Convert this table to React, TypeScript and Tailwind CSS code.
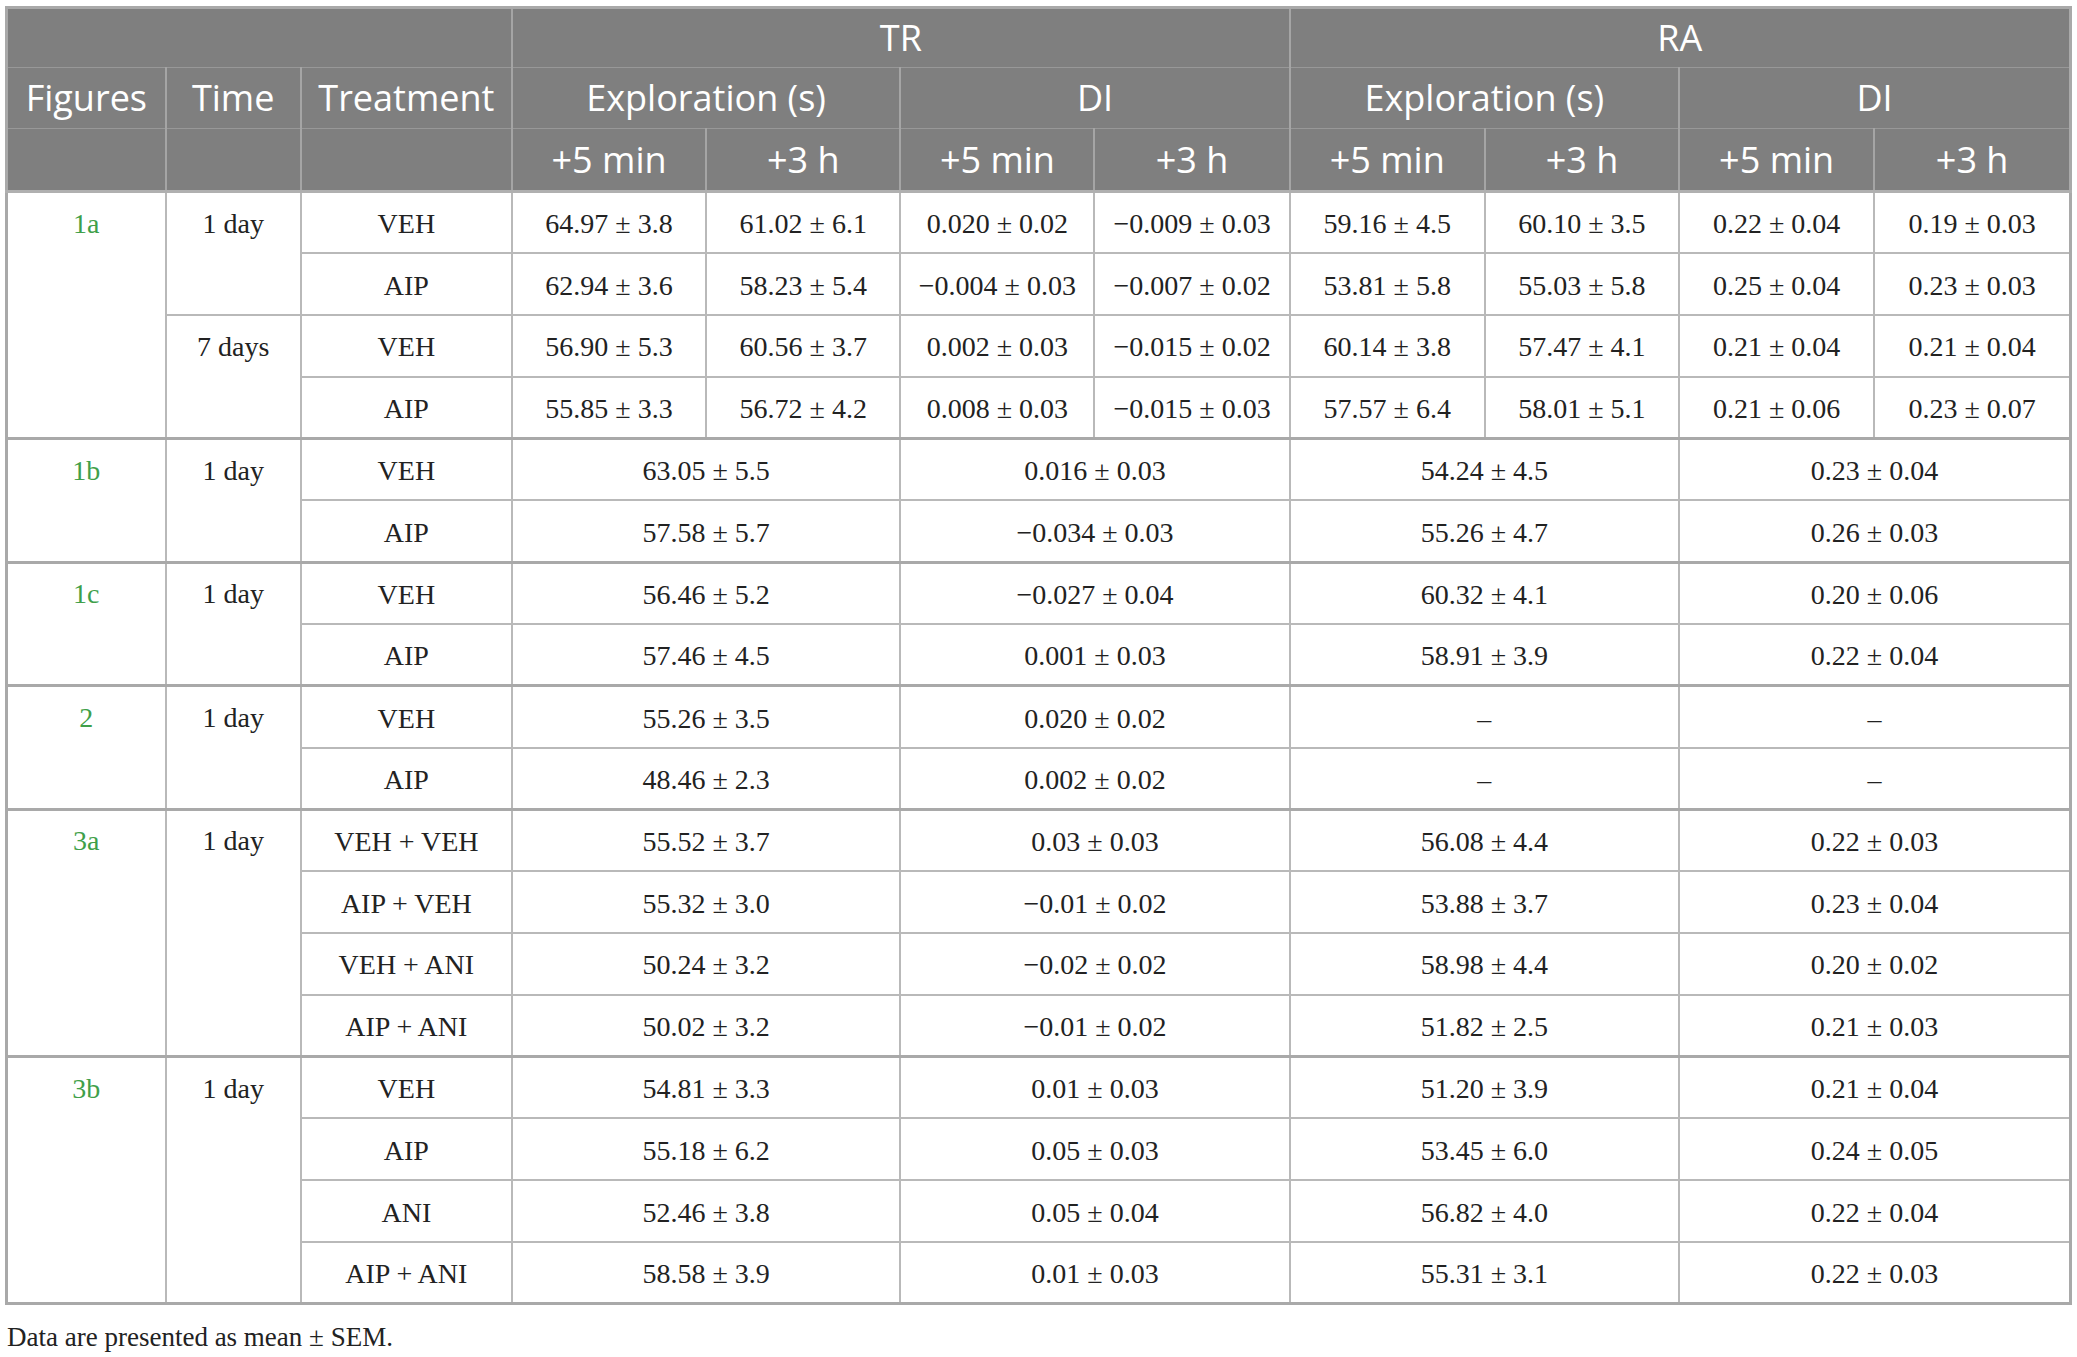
import React from "react";

type Row = { t?: string; tSpan?: number; treat: string; v: string[] };
type Group = { fig: string; rows: Row[] };

const groups: Group[] = [
  {
    fig: "1a",
    rows: [
      { t: "1 day", tSpan: 2, treat: "VEH", v: ["64.97 ± 3.8", "61.02 ± 6.1", "0.020 ± 0.02", "−0.009 ± 0.03", "59.16 ± 4.5", "60.10 ± 3.5", "0.22 ± 0.04", "0.19 ± 0.03"] },
      { treat: "AIP", v: ["62.94 ± 3.6", "58.23 ± 5.4", "−0.004 ± 0.03", "−0.007 ± 0.02", "53.81 ± 5.8", "55.03 ± 5.8", "0.25 ± 0.04", "0.23 ± 0.03"] },
      { t: "7 days", tSpan: 2, treat: "VEH", v: ["56.90 ± 5.3", "60.56 ± 3.7", "0.002 ± 0.03", "−0.015 ± 0.02", "60.14 ± 3.8", "57.47 ± 4.1", "0.21 ± 0.04", "0.21 ± 0.04"] },
      { treat: "AIP", v: ["55.85 ± 3.3", "56.72 ± 4.2", "0.008 ± 0.03", "−0.015 ± 0.03", "57.57 ± 6.4", "58.01 ± 5.1", "0.21 ± 0.06", "0.23 ± 0.07"] },
    ],
  },
  {
    fig: "1b",
    rows: [
      { t: "1 day", tSpan: 2, treat: "VEH", v: ["63.05 ± 5.5", "0.016 ± 0.03", "54.24 ± 4.5", "0.23 ± 0.04"] },
      { treat: "AIP", v: ["57.58 ± 5.7", "−0.034 ± 0.03", "55.26 ± 4.7", "0.26 ± 0.03"] },
    ],
  },
  {
    fig: "1c",
    rows: [
      { t: "1 day", tSpan: 2, treat: "VEH", v: ["56.46 ± 5.2", "−0.027 ± 0.04", "60.32 ± 4.1", "0.20 ± 0.06"] },
      { treat: "AIP", v: ["57.46 ± 4.5", "0.001 ± 0.03", "58.91 ± 3.9", "0.22 ± 0.04"] },
    ],
  },
  {
    fig: "2",
    rows: [
      { t: "1 day", tSpan: 2, treat: "VEH", v: ["55.26 ± 3.5", "0.020 ± 0.02", "–", "–"] },
      { treat: "AIP", v: ["48.46 ± 2.3", "0.002 ± 0.02", "–", "–"] },
    ],
  },
  {
    fig: "3a",
    rows: [
      { t: "1 day", tSpan: 4, treat: "VEH + VEH", v: ["55.52 ± 3.7", "0.03 ± 0.03", "56.08 ± 4.4", "0.22 ± 0.03"] },
      { treat: "AIP + VEH", v: ["55.32 ± 3.0", "−0.01 ± 0.02", "53.88 ± 3.7", "0.23 ± 0.04"] },
      { treat: "VEH + ANI", v: ["50.24 ± 3.2", "−0.02 ± 0.02", "58.98 ± 4.4", "0.20 ± 0.02"] },
      { treat: "AIP + ANI", v: ["50.02 ± 3.2", "−0.01 ± 0.02", "51.82 ± 2.5", "0.21 ± 0.03"] },
    ],
  },
  {
    fig: "3b",
    rows: [
      { t: "1 day", tSpan: 4, treat: "VEH", v: ["54.81 ± 3.3", "0.01 ± 0.03", "51.20 ± 3.9", "0.21 ± 0.04"] },
      { treat: "AIP", v: ["55.18 ± 6.2", "0.05 ± 0.03", "53.45 ± 6.0", "0.24 ± 0.05"] },
      { treat: "ANI", v: ["52.46 ± 3.8", "0.05 ± 0.04", "56.82 ± 4.0", "0.22 ± 0.04"] },
      { treat: "AIP + ANI", v: ["58.58 ± 3.9", "0.01 ± 0.03", "55.31 ± 3.1", "0.22 ± 0.03"] },
    ],
  },
];

const colWidths = [159, 135, 211, 194, 194, 194, 195, 195, 194, 195, 196];

export default function App() {
  return (
    <div className="min-h-screen bg-white pl-[5px] pt-[6px]">
      <table className="table-fixed border-collapse border-[3px] border-[#a9a9a9] w-[2067px] font-['Liberation_Serif',serif] text-[28px] text-[#222]">
        <colgroup>
          {colWidths.map((w, i) => (
            <col key={i} style={{ width: w }} />
          ))}
        </colgroup>
        <thead className="bg-[#7f7f7f] text-white font-['Open_Sans',sans-serif] text-[36px] font-normal">
          <tr className="h-[60px]">
            <th colSpan={3} className="border border-[#989898] border-x-2 border-x-[#a5a5a5] font-normal"></th>
            <th colSpan={4} className="border border-[#989898] border-x-2 border-x-[#a5a5a5] font-normal leading-none">TR</th>
            <th colSpan={4} className="border border-[#989898] border-x-2 border-x-[#a5a5a5] font-normal leading-none">RA</th>
          </tr>
          <tr className="h-[61px]">
            <th className="border border-[#989898] border-x-2 border-x-[#a5a5a5] font-normal leading-none">Figures</th>
            <th className="border border-[#989898] border-x-2 border-x-[#a5a5a5] font-normal leading-none">Time</th>
            <th className="border border-[#989898] border-x-2 border-x-[#a5a5a5] font-normal leading-none">Treatment</th>
            <th colSpan={2} className="border border-[#989898] border-x-2 border-x-[#a5a5a5] font-normal leading-none">Exploration (s)</th>
            <th colSpan={2} className="border border-[#989898] border-x-2 border-x-[#a5a5a5] font-normal leading-none">DI</th>
            <th colSpan={2} className="border border-[#989898] border-x-2 border-x-[#a5a5a5] font-normal leading-none">Exploration (s)</th>
            <th colSpan={2} className="border border-[#989898] border-x-2 border-x-[#a5a5a5] font-normal leading-none">DI</th>
          </tr>
          <tr className="h-[63px]">
            <th className="border border-[#989898] border-x-2 border-x-[#a5a5a5] border-b-[3px] border-b-[#b0b0b0] font-normal"></th>
            <th className="border border-[#989898] border-x-2 border-x-[#a5a5a5] border-b-[3px] border-b-[#b0b0b0] font-normal"></th>
            <th className="border border-[#989898] border-x-2 border-x-[#a5a5a5] border-b-[3px] border-b-[#b0b0b0] font-normal"></th>
            {["+5 min", "+3 h", "+5 min", "+3 h", "+5 min", "+3 h", "+5 min", "+3 h"].map((h, i) => (
              <th key={i} className="border border-[#989898] border-x-2 border-x-[#a5a5a5] border-b-[3px] border-b-[#b0b0b0] font-normal leading-none">
                {h}
              </th>
            ))}
          </tr>
        </thead>
        <tbody>
          {groups.map((g, gi) =>
            g.rows.map((r, ri) => {
              const first = ri === 0;
              const cell = first
                ? "border-2 border-[#b9b9b9] border-t-[3px] border-t-[#a9a9a9] text-center align-middle leading-none whitespace-nowrap pt-[3px]"
                : "border-2 border-[#b9b9b9] text-center align-middle leading-none whitespace-nowrap pt-[3px]";
              const spanCell = first
                ? "border-2 border-[#b9b9b9] border-t-[3px] border-t-[#a9a9a9] text-center align-top leading-none whitespace-nowrap"
                : "border-2 border-[#b9b9b9] text-center align-top leading-none whitespace-nowrap";
              return (
                <tr key={`${gi}-${ri}`} className="h-[61.8px]">
                  {first && (
                    <td rowSpan={g.rows.length} className={`${spanCell} text-[#3f9f4a]`}>
                      <div className="h-[58px] pt-[3px] flex items-center justify-center">{g.fig}</div>
                    </td>
                  )}
                  {r.t && (
                    <td rowSpan={r.tSpan} className={spanCell}>
                      <div className="h-[58px] pt-[3px] flex items-center justify-center">{r.t}</div>
                    </td>
                  )}
                  <td className={cell}>{r.treat}</td>
                  {r.v.map((x, i) => (
                    <td key={i} colSpan={r.v.length === 4 ? 2 : 1} className={cell}>
                      {x}
                    </td>
                  ))}
                </tr>
              );
            })
          )}
        </tbody>
      </table>
      <p className="mt-[19px] font-['Liberation_Serif',serif] text-[27px] leading-none text-[#222] pl-[2px]">
        Data are presented as mean ± SEM.
      </p>
    </div>
  );
}
